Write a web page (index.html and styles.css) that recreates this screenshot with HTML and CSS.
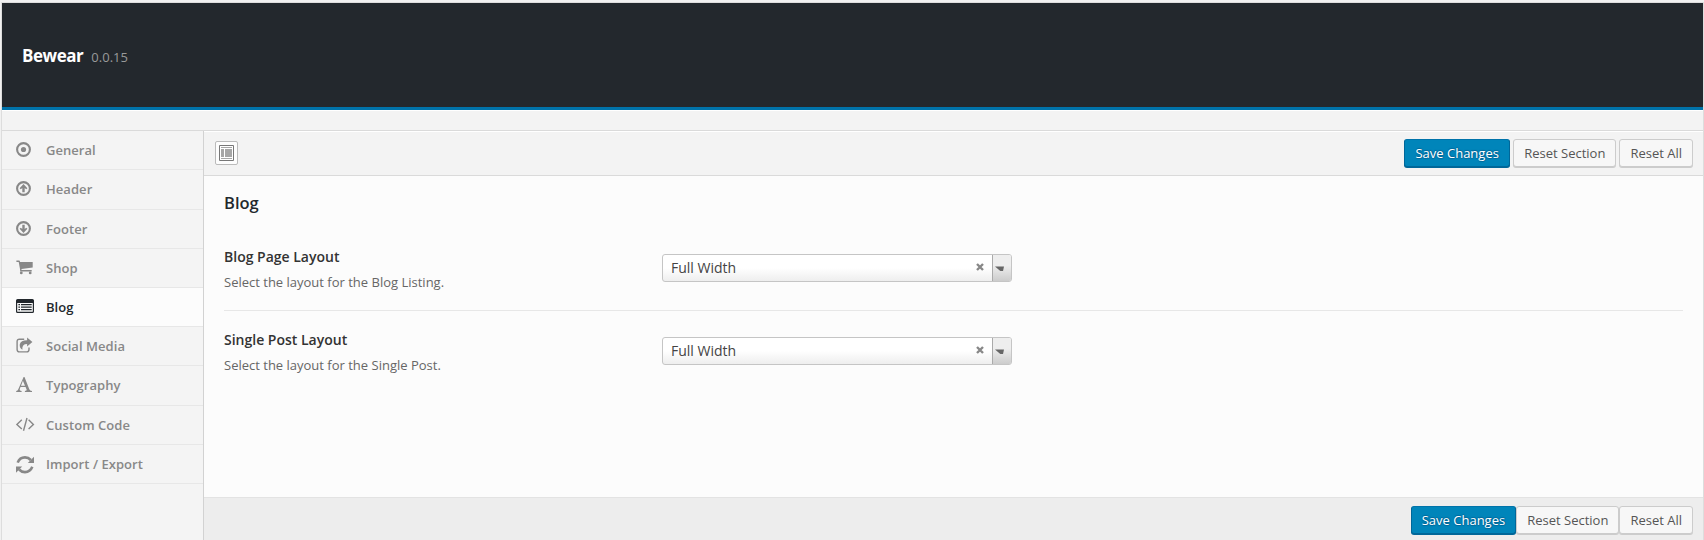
FILE: index.html
```html
<!DOCTYPE html>
<html lang="en">
<head>
<meta charset="utf-8">
<title>Bewear options</title>
<link rel="stylesheet" href="styles.css">
</head>
<body>
<div class="panel">
  <header class="header"><h1 class="brand">Bewear</h1><span class="version">0.0.15</span></header>
  <div class="infobar"></div>
  <div class="columns">
    <nav class="sidebar">
      <a class="item"><svg class="icon" viewBox="0 0 18 18"><circle cx="7.5" cy="7.5" r="6.4" fill="none" stroke="currentColor" stroke-width="2.1"/><circle cx="7.5" cy="7.5" r="2.6" fill="currentColor"/></svg><span>General</span></a>
      <a class="item tall"><svg class="icon" viewBox="0 0 18 18"><circle cx="7.5" cy="7.5" r="6.4" fill="none" stroke="currentColor" stroke-width="2.1"/><path d="M7.5 3.1 11.4 7.2 10.2 8.3 8.7 6.9V11.3H6.3V6.9L4.8 8.3 3.6 7.2Z" fill="currentColor"/></svg><span>Header</span></a>
      <a class="item"><svg class="icon" viewBox="0 0 18 18"><circle cx="7.5" cy="7.5" r="6.4" fill="none" stroke="currentColor" stroke-width="2.1"/><path d="M7.5 11.9 11.4 7.8 10.2 6.7 8.7 8.1V3.7H6.3V8.1L4.8 6.7 3.6 7.8Z" fill="currentColor"/></svg><span>Footer</span></a>
      <a class="item"><svg class="icon" viewBox="0 0 18 18"><path d="M.4.6H3.3Q3.9.7 4.1 2H16.7V7.6L5.5 9.1V10.1H15.7V11.4H4.1V9.6L2.7 2H.4Z" fill="currentColor"/><circle cx="5.3" cy="12.9" r="1.4" fill="currentColor"/><circle cx="14.2" cy="12.9" r="1.4" fill="currentColor"/></svg><span>Shop</span></a>
      <a class="item active"><svg class="icon" viewBox="0 0 18 18"><path fill-rule="evenodd" d="M1.6 0H16.4Q18 0 18 1.6V12.4Q18 14 16.4 14H1.6Q0 14 0 12.4V1.6Q0 0 1.6 0ZM1.2 4V12.2Q1.2 12.8 1.8 12.8H16.2Q16.8 12.8 16.8 12.2V4Z" fill="currentColor"/><path d="M2.4 5.6H4M2.4 8.1H4M2.4 10.6H4M5 5.6H15.7M5 8.1H15.7M5 10.6H15.7" stroke="currentColor" stroke-width="1.2"/></svg><span>Blog</span></a>
      <a class="item"><svg class="icon" viewBox="0 0 18 18"><path d="M8.2 1.2H3.4Q1.1 1.2 1.1 3.5V11.5Q1.1 13.9 3.4 13.9H10.7Q13 13.9 13 11.5V9.6" fill="none" stroke="currentColor" stroke-width="1.4"/><path d="M11.1-.4 16.4 3.9 11.1 8.4V6Q5.7 6 6.4 11.8 3.2 9.8 3.8 6.2 4.7 2.2 11.1 2.2Z" fill="currentColor"/></svg><span>Social Media</span></a>
      <a class="item tall"><svg class="icon" viewBox="0 0 18 18"><path fill-rule="evenodd" d="M7.6 0H8.5L13.3 12.2Q13.8 13.8 16 14V15H8.9V14Q11.1 13.9 10.7 12.8L9.6 9.9H4.5L3.7 12.2Q3.3 13.8 5.6 14V15H.2V14Q1.7 13.8 2.3 12.3ZM6.9 3.8 5 8.8H9Z" fill="currentColor"/></svg><span>Typography</span></a>
      <a class="item"><svg class="icon" viewBox="0 0 18 18"><path d="M5.8 2.8.9 7.4 5.8 12M12.6 2.8 17.4 7.4 12.6 12M11 1 7.5 13.8" fill="none" stroke="currentColor" stroke-width="1.4"/></svg><span>Custom Code</span></a>
      <a class="item"><svg class="icon" viewBox="0 0 18 18"><path d="M1.7 6.6Q3.6 1.4 9 1.4 12.4 1.4 14.8 4M16.3 10.8Q14.2 16.1 9 16.1 5.5 16.1 3.1 13.5" fill="none" stroke="currentColor" stroke-width="2.6"/><path d="M18 .8V7H11.8ZM0 16.8V10.6H6.2Z" fill="currentColor"/></svg><span>Import / Export</span></a>
    </nav>
    <main class="main">
      <div class="toolbar">
        <button class="expand" aria-label="Expand"><svg width="15" height="16" viewBox="0 0 15 16"><path d="M.5.5H14.5V15.5H.5Z" fill="#fff" stroke="#777"/><path d="M2 2H13V3H2ZM2 4H5V12H2ZM6 4H13V12H6ZM2 13H13V14H2Z" fill="#a6a6a6"/></svg></button>
        <div class="actions"><button class="btn primary">Save Changes</button><button class="btn">Reset Section</button><button class="btn">Reset All</button></div>
      </div>
      <section class="content">
        <h2 class="title">Blog</h2>
        <div class="field">
          <div class="label"><h3>Blog Page Layout</h3><p>Select the layout for the Blog Listing.</p></div>
          <div class="select"><span class="value">Full Width</span><svg class="clear" viewBox="0 0 8 8"><path d="M1 1 7 7M7 1 1 7" stroke="#888" stroke-width="2.4"/></svg><span class="arrow"><svg viewBox="0 0 9 6"><path d="M0 .5H9L8 5H5.4L4.4 4.3Z" fill="#666"/></svg></span></div>
        </div>
        <div class="field">
          <div class="label"><h3>Single Post Layout</h3><p>Select the layout for the Single Post.</p></div>
          <div class="select"><span class="value">Full Width</span><svg class="clear" viewBox="0 0 8 8"><path d="M1 1 7 7M7 1 1 7" stroke="#888" stroke-width="2.4"/></svg><span class="arrow"><svg viewBox="0 0 9 6"><path d="M0 .5H9L8 5H5.4L4.4 4.3Z" fill="#666"/></svg></span></div>
        </div>
      </section>
      <footer class="footer"><div class="actions"><button class="btn primary">Save Changes</button><button class="btn">Reset Section</button><button class="btn">Reset All</button></div></footer>
    </main>
  </div>
</div>
</body>
</html>
```
FILE: styles.css
```css
* { box-sizing: border-box; }
body { margin: 0; height: 540px; overflow: hidden; padding: 2px 0 0 1px; background: #f1f1f1; font: 13px/20px "Open Sans", sans-serif; color: #555; }
h1, h2, h3, p { margin: 0; }
.panel { display: flex; flex-direction: column; height: 538px; border: 1px solid #ddd; border-bottom: 0; background: #f3f3f3; }
.header { display: flex; align-items: baseline; gap: 8px; height: 107px; padding: 39px 20px 0; background: #23282d; border-bottom: 3px solid #0073aa; }
.brand { font-size: 17px; line-height: 28px; font-weight: 700; color: #fff; letter-spacing: -.45px; }
.version { font-size: 13px; color: #999; }
.infobar { height: 21px; border-top: 1px solid #fff; border-bottom: 1px solid #dadada; }
.columns { display: flex; flex: 1; min-height: 0; }
.sidebar { width: 202px; border-right: 1px solid #d2d2d2; background: #f4f4f4; }
.item { display: flex; align-items: flex-start; gap: 12px; height: 39px; padding: 0 14px; border-bottom: 1px solid #e7e7e7; font-weight: 600; line-height: 39px; color: #888; letter-spacing: .05px; }
.tall { height: 40px; }
.icon { width: 18px; height: 18px; margin-top: 11px; flex: none; overflow: visible; }
.active { background: #fcfcfc; color: #23282d; letter-spacing: 0; }
.main { display: flex; flex-direction: column; flex: 1; min-width: 0; }
.toolbar { display: flex; justify-content: space-between; height: 45px; padding: 7px 10px 0 11px; background: #f3f3f3; border-top: 1px solid #fff; border-bottom: 1px solid #dadada; }
.expand { display: flex; align-items: center; justify-content: center; width: 23px; height: 24px; margin-top: 2px; padding: 0; border: 1px solid #bbb; border-radius: 2px; background: #fdfdfd; }
.actions { display: flex; gap: 3px; }
.btn { height: 28px; padding: 0 10px; border: 1px solid #ccc; border-radius: 3px; background: #f7f7f7; box-shadow: 0 1px 0 #ccc; color: #555; font: 13px/26px "Open Sans", sans-serif; white-space: nowrap; }
.primary { background: #0085ba; border-color: #0073aa #006799 #006799; box-shadow: 0 1px 0 #006799; color: #fff; text-shadow: 0 -1px 1px #006799, 1px 0 1px #006799, 0 1px 1px #006799; }
.toolbar .primary { min-width: 106px; }
.content { flex: 1; padding: 15px 20px 0; background: #fcfcfc; }
.title { height: 45px; font-size: 16.5px; line-height: 24px; font-weight: 600; color: #23282d; }
.field { display: flex; height: 74px; padding-top: 10px; }
.field + .field { border-top: 1px solid #e7e7e7; }
.label { width: 438px; }
.field + .field .label { padding-top: 8px; }
.label h3 { height: 26px; font-size: 14px; line-height: 22px; font-weight: 600; color: #333; }
.label p { color: #666; }
.select { display: flex; align-items: center; width: 350px; height: 28px; margin-top: 8px; padding-left: 8px; border: 1px solid #c5c5c5; border-radius: 3px; background: linear-gradient(#fff 50%, #eee); color: #444; font-size: 14px; overflow: hidden; }
.field + .field .select { margin-top: 16px; }
.value { flex: 1; }
.clear { width: 8px; height: 8px; margin: 0 8px 2px 0; }
.arrow { display: flex; align-items: center; width: 19px; height: 26px; padding-left: 2px; border-left: 1px solid #aaa; background: linear-gradient(#eee 40%, #ccc); }
.arrow svg { width: 9px; height: 6px; margin-top: 2px; }
.footer { display: flex; justify-content: flex-end; height: 43px; padding: 8px 10px 0; border-top: 1px solid #e3e3e3; background: #ededed; }
.footer .actions { gap: 0; }
```
